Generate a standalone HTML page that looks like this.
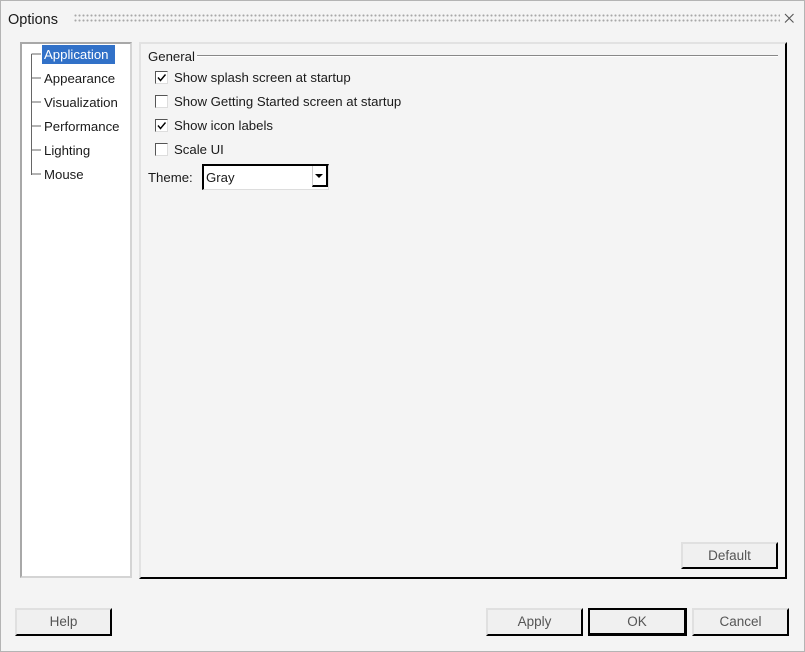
<!DOCTYPE html>
<html><head><style>
*{margin:0;padding:0;box-sizing:border-box}
body{width:805px;height:652px;background:#f4f4f4;font-family:"Liberation Sans",sans-serif;font-size:13.2px;color:#1a1a1a;position:relative;overflow:hidden}
.a{position:absolute}
.frame{left:0;top:0;width:805px;height:652px;border:1px solid #b4b4b4}
.grip{left:74px;top:14px;width:706px;height:10px;background-image:radial-gradient(circle at 1.5px 1.5px,#a8a8a8 0.9px,transparent 1.2px);background-size:4px 5px}
.tree{left:20px;top:42px;width:112px;height:536px;background:#fff;border-left:2px solid #a8a8a8;border-top:2px solid #a8a8a8;border-right:2px solid #d4d4d4;border-bottom:2px solid #d4d4d4}
.panel{left:139px;top:42px;width:648px;height:537px;background:#f4f4f4;border-left:2px solid #e2e2e2;border-top:2px solid #e2e2e2;border-right:2px solid #000;border-bottom:2px solid #000}
.ti{position:absolute;left:44px;height:19px;line-height:20px}
.cb{position:absolute;left:155px;width:13px;height:13px;background:#fff;border-left:1px solid #555;border-top:1px solid #555;border-right:1px solid #ddd;border-bottom:1px solid #ddd}
.cl{position:absolute;left:174px;line-height:18px}
.btn{position:absolute;height:28px;background:#f0f0f0;border-left:2px solid #e0e0e0;border-top:2px solid #e0e0e0;border-right:2px solid #000;border-bottom:2px solid #000;text-align:center;line-height:24px;color:#555;font-size:13.5px}
</style></head><body>
<div class="a frame"></div>
<div class="a" style="left:8px;top:12px;font-size:14.5px">Options</div>
<div class="a grip"></div>
<svg class="a" style="left:784px;top:13px" width="11" height="11"><path d="M1 1L9.5 9.5M9.5 1L1 9.5" stroke="#555" stroke-width="1.1"/></svg>

<div class="a tree"></div>
<svg class="a" style="left:20px;top:42px" width="40" height="140"><path d="M11.5 12V133M11.5 12H21M11.5 36H21M11.5 60H21M11.5 84H21M11.5 108H21M11.5 132H21" stroke="#666" stroke-width="1" fill="none"/></svg>
<div class="a" style="left:42px;top:45px;width:73px;height:19px;background:#3171c8"></div>
<div class="ti" style="top:45px;color:#fff">Application</div>
<div class="ti" style="top:69px">Appearance</div>
<div class="ti" style="top:93px">Visualization</div>
<div class="ti" style="top:117px">Performance</div>
<div class="ti" style="top:141px">Lighting</div>
<div class="ti" style="top:165px">Mouse</div>

<div class="a panel"></div>
<div class="a" style="left:148px;top:48px;line-height:18px">General</div>
<div class="a" style="left:197px;top:55px;width:581px;height:2px;border-top:1px solid #888;border-bottom:1px solid #fff"></div>

<div class="cb" style="top:71px"></div>
<svg class="a" style="left:157px;top:73px" width="10" height="10"><path d="M1 4.5L3.5 7.5L8.5 1.5" stroke="#000" stroke-width="1.4" fill="none"/></svg>
<div class="cl" style="top:69px">Show splash screen at startup</div>
<div class="cb" style="top:95px"></div>
<div class="cl" style="top:93px">Show Getting Started screen at startup</div>
<div class="cb" style="top:119px"></div>
<svg class="a" style="left:157px;top:121px" width="10" height="10"><path d="M1 4.5L3.5 7.5L8.5 1.5" stroke="#000" stroke-width="1.4" fill="none"/></svg>
<div class="cl" style="top:117px">Show icon labels</div>
<div class="cb" style="top:143px"></div>
<div class="cl" style="top:141px">Scale UI</div>

<div class="a" style="left:148px;top:169px;line-height:18px">Theme:</div>
<div class="a" style="left:202px;top:164px;width:127px;height:26px;background:#fff;border-left:2px solid #000;border-top:2px solid #000;border-right:1px solid #ddd;border-bottom:1px solid #ddd"></div>
<div class="a" style="left:206px;top:169px;line-height:18px">Gray</div>
<div class="a" style="left:312px;top:166px;width:16px;height:21px;background:#fff;border-left:1px solid #ccc;border-right:2px solid #000;border-bottom:2px solid #000"></div>
<svg class="a" style="left:315px;top:174px" width="9" height="5"><path d="M0 0H8L4 4Z" fill="#000"/></svg>

<div class="btn" style="left:681px;top:542px;width:97px;height:27px">Default</div>
<div class="btn" style="left:15px;top:608px;width:97px">Help</div>
<div class="btn" style="left:486px;top:608px;width:97px">Apply</div>
<div class="btn" style="left:588px;top:608px;width:99px;border:2px solid #000;border-right:3px solid #000;border-bottom:3px solid #000">OK</div>
<div class="btn" style="left:692px;top:608px;width:97px">Cancel</div>
</body></html>
